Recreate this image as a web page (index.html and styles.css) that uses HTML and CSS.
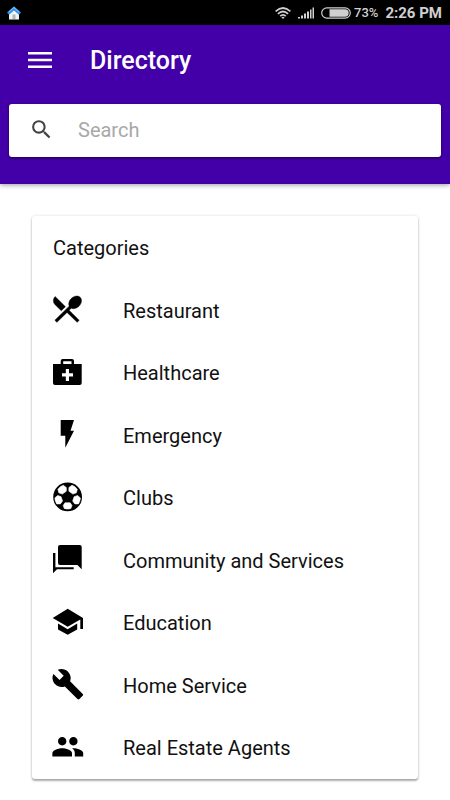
FILE: index.html
```html
<!DOCTYPE html>
<html lang="en">
<head>
<meta charset="utf-8">
<meta name="viewport" content="width=device-width, initial-scale=1">
<title>Directory</title>
<link rel="stylesheet" href="styles.css">
</head>
<body>
<div class="status">
  <svg class="home" viewBox="0 0 14 14" aria-hidden="true">
    <path d="M2 7 7 3l5 4v6.500H2z" fill="#f2f2f2"/>
    <path d="M5.500 8.500h3V13h-3z" fill="#b5b5b5"/>
    <path d="M1 7.700 7 2.300l6 5.400" fill="none" stroke="#2e8ee8" stroke-width="3"/>
    <path d="M2 6 7 1.500 12 6" fill="none" stroke="#8cc8fa" stroke-width="1"/>
  </svg>
  <div class="indicators">
    <svg class="wifi" viewBox="0 0 16 12" aria-hidden="true">
      <g fill="none" stroke="#d0d0d0" stroke-width="1.700">
        <path d="M.6 4.300Q8-2.300 15.400 4.300M2.900 6.800Q8 2.200 13.100 6.800M5.200 9.200Q8 6.700 10.800 9.200"/>
      </g>
      <path d="M6.400 10.300Q8 9 9.600 10.300L8 12z" fill="#d0d0d0"/>
    </svg>
    <svg class="signal" viewBox="0 0 16 12" aria-hidden="true">
      <path d="M0 10h2v1.500H0zM3 8.500h2v3H3zM6 6.500h2v5H6zM9 4.500h2v7H9zM12 2.500h1.500v9H12zM14.500.5H16v11h-1.500z" fill="#d0d0d0"/>
    </svg>
    <svg class="battery" viewBox="0 0 30 12" aria-hidden="true">
      <rect x=".7" y=".8" width="28.600" height="10.400" rx="5.200" fill="none" stroke="#d0d0d0" stroke-width="1.200"/>
      <path d="M8.500 2.300H24a3.700 3.700 0 0 1 0 7.400H8.500z" fill="#d0d0d0"/>
    </svg>
    <span class="percent">73%</span>
    <span class="time">2:26 PM</span>
  </div>
</div>
<header class="header">
  <div class="toolbar">
    <button class="menu" type="button" aria-label="Menu">
      <svg viewBox="0 0 24 16" aria-hidden="true"><path d="M0 0h24v2.500H0zM0 6.700h24v2.500H0zM0 13.400h24v2.500H0z" fill="currentColor"/></svg>
    </button>
    <h1>Directory</h1>
  </div>
  <label class="search">
    <svg viewBox="0 0 24 24" aria-hidden="true"><path fill="#424242" d="M15.500 14h-.79l-.28-.27A6.471 6.471 0 0 0 16 9.500 6.500 6.500 0 1 0 9.500 16c1.610 0 3.090-.59 4.230-1.570l.27.28v.79l5 4.990L20.490 19l-4.990-5zm-6 0C7.010 14 5 11.990 5 9.500S7.010 5 9.500 5 14 7.010 14 9.500 11.990 14 9.500 14z"/></svg>
    <input type="search" placeholder="Search" aria-label="Search">
  </label>
</header>
<main>
  <section class="card">
    <h2>Categories</h2>
    <ul>
      <li><a href="#restaurant"><svg viewBox="0 0 36 36" aria-hidden="true"><path stroke="#000" stroke-width=".3" transform="translate(.4 .5) scale(1.470 1.450)" d="M8.100 13.340l2.830-2.830L3.910 3.500c-1.560 1.560-1.560 4.090 0 5.660l4.190 4.180zm6.780-1.810c1.530.71 3.680.21 5.270-1.380 1.910-1.910 2.280-4.650.81-6.120-1.460-1.460-4.200-1.100-6.120.81-1.590 1.590-2.090 3.740-1.380 5.270L3.700 19.870l1.410 1.410L12 14.410l6.880 6.880 1.410-1.410L13.410 13l1.470-1.470z"/></svg><span>Restaurant</span></a></li>
      <li><a href="#healthcare"><svg viewBox="0 0 36 36" aria-hidden="true"><path fill-rule="evenodd" d="M11.700 10V7a2 2 0 0 1 2-2H23a2 2 0 0 1 2 2v3h7.700v19a2 2 0 0 1-2 2H6a2 2 0 0 1-2-2V10zM14.200 10h8.300V7.200h-8.300zM16.800 15v4.200H13v3.200h3.800V27H20v-4.600h4v-3.200h-4V15z"/></svg><span>Healthcare</span></a></li>
      <li><a href="#emergency"><svg viewBox="0 0 36 36" aria-hidden="true"><path d="M11.700 4H25l-3.500 10.700H25l-8.700 17v-12h-4.600z"/></svg><span>Emergency</span></a></li>
      <li><a href="#clubs"><svg viewBox="0 0 36 36" aria-hidden="true"><circle cx="18.600" cy="17.900" r="14.400"/><g fill="#fff" stroke="#fff" stroke-width=".6" stroke-linejoin="round"><path d="M17.300 8.500v3.700l-4 2.900-3.500-1.300-.9-3.500q2-2.900 5.300-4.100z"/><path d="M19.900 8.500v3.700l4 2.900 3.500-1.300.9-3.500q-2-2.900-5.300-4.100z"/><path d="m8.700 16.500 3.400 1.200 1.400 4.300-2.100 2.900H7.700q-1.700-2.600-1.900-6z"/><path d="m28.500 16.500-3.400 1.200-1.400 4.300 2.100 2.900h3.700q1.700-2.600 1.900-6z"/><path d="M16 23.800h5.200l1.800 2.700-1.100 3q-3.300 1.100-6.600 0l-1.100-3z"/></g></svg><span>Clubs</span></a></li>
      <li><a href="#community"><svg viewBox="0 0 36 36" aria-hidden="true"><path d="M11 4h19.700a2 2 0 0 1 2 2v22.300L28.400 24H11a2 2 0 0 1-2-2V6a2 2 0 0 1 2-2zM4 12h2.400v14.300h18.300v2H8l-4 4z"/></svg><span>Community and Services</span></a></li>
      <li><a href="#education"><svg viewBox="0 0 36 36" aria-hidden="true"><path d="M18.700 4.700 34 14v11h-2.700v-9.400L18.700 22.700 3.700 14zM9 19.400l9.700 5.800 9.500-5.800v6l-9.500 5.300L9 25.400z"/></svg><span>Education</span></a></li>
      <li><a href="#home-service"><svg viewBox="0 0 36 36" aria-hidden="true"><path transform="translate(2.200 1.500) scale(1.390)" d="M22.700 19l-9.100-9.100c.9-2.300.4-5-1.500-6.900-2-2-5-2.400-7.400-1.300L9 6 6 9 1.600 4.700C.4 7.100.9 10.100 2.900 12.100c1.900 1.900 4.600 2.400 6.900 1.500l9.100 9.100c.4.4 1 .4 1.400 0l2.300-2.300c.5-.4.5-1.100.1-1.400z"/></svg><span>Home Service</span></a></li>
      <li><a href="#real-estate"><svg viewBox="0 0 36 36" aria-hidden="true"><path transform="translate(2 1) scale(1.400)" d="M16 11c1.660 0 2.990-1.340 2.990-3S17.660 5 16 5c-1.660 0-3 1.340-3 3s1.340 3 3 3zm-8 0c1.660 0 2.990-1.340 2.990-3S9.660 5 8 5C6.340 5 5 6.340 5 8s1.340 3 3 3zm0 2c-2.330 0-7 1.170-7 3.500V19h14v-2.500c0-2.330-4.670-3.500-7-3.500zm8 0c-.29 0-.62.020-.97.050 1.160.84 1.970 1.970 1.970 3.450V19h6v-2.500c0-2.330-4.670-3.500-7-3.500z"/></svg><span>Real Estate Agents</span></a></li>
    </ul>
  </section>
</main>
</body>
</html>
```
FILE: styles.css
```css
* { box-sizing: border-box; }
body {
  margin: 0;
  background: #fff;
  color: #111;
  font-family: Roboto, sans-serif;
}
svg { display: block; flex: none; }

.status {
  display: flex;
  align-items: center;
  justify-content: space-between;
  height: 25px;
  padding: 0 8px 0 7px;
  background: #000;
  color: #d0d0d0;
}
.home { width: 14px; height: 14px; }
.indicators { display: flex; align-items: center; gap: 7px; }
.wifi { width: 16px; height: 12px; }
.signal { width: 16px; height: 12px; }
.battery { width: 30px; height: 12px; margin-right: -4px; }
.percent { font-size: 13px; font-weight: 500; }
.time { font-size: 15px; font-weight: 700; }

.header {
  padding: 0 9px 27px;
  background: #4300a8;
  box-shadow: 0 1px 5px rgba(0, 0, 0, 0.4);
}
.toolbar {
  display: flex;
  align-items: center;
  gap: 32px;
  height: 79px;
  padding: 0 13px 9px;
  color: #fff;
}
.menu {
  padding: 6px;
  border: 0;
  background: none;
  color: inherit;
}
.menu svg { width: 24px; height: 16px; }
h1 { margin: 0; font-size: 25px; font-weight: 500; }

.search {
  display: flex;
  align-items: center;
  gap: 24px;
  height: 53px;
  padding: 0 20px 2px;
  border-radius: 3px;
  background: #fff;
  box-shadow: 0 1px 3px rgba(0, 0, 0, 0.6);
}
.search svg { width: 25px; height: 25px; }
.search input {
  flex: 1;
  min-width: 0;
  padding: 0;
  border: 0;
  outline: 0;
  background: none;
  color: #111;
  font: 20px Roboto, sans-serif;
}
.search input::placeholder { color: #a8a8a8; }

main { padding: 32px; }
.card {
  padding-bottom: 1px;
  border-radius: 3px;
  background: #fff;
  box-shadow: 0 2px 2px rgba(0, 0, 0, 0.3), 0 0 3px rgba(0, 0, 0, 0.15);
}
h2 {
  margin: 0;
  padding: 2px 21px 0;
  font-size: 20px;
  font-weight: 400;
  line-height: 60px;
}
ul { margin: 0; padding: 0; list-style: none; }
li a {
  display: flex;
  align-items: center;
  gap: 38px;
  height: 62px;
  padding: 0 17px;
  color: inherit;
  font-size: 20px;
  text-decoration: none;
}
li:nth-child(even) a { height: 63px; }
li svg { width: 36px; height: 36px; fill: #000; }
li span { padding-top: 3px; }
```
